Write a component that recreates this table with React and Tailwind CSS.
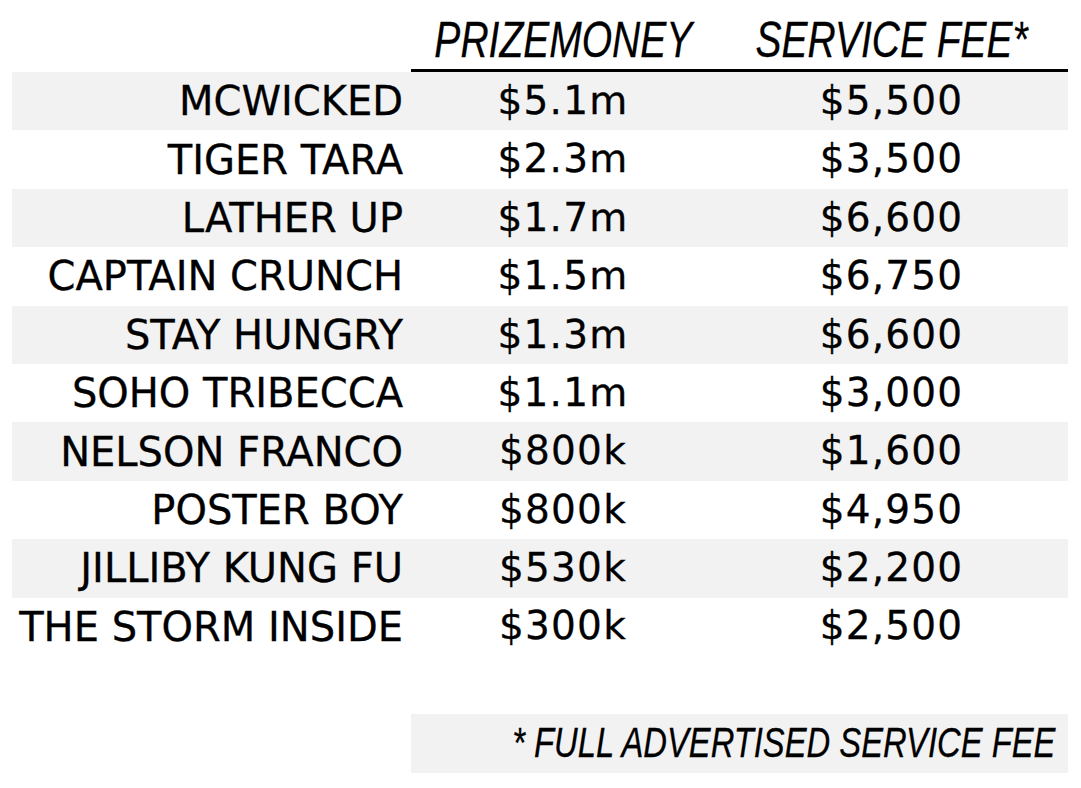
import React from 'react';

const horses = [
  { name: 'MCWICKED', prize: '$5.1m', fee: '$5,500' },
  { name: 'TIGER TARA', prize: '$2.3m', fee: '$3,500' },
  { name: 'LATHER UP', prize: '$1.7m', fee: '$6,600' },
  { name: 'CAPTAIN CRUNCH', prize: '$1.5m', fee: '$6,750' },
  { name: 'STAY HUNGRY', prize: '$1.3m', fee: '$6,600' },
  { name: 'SOHO TRIBECCA', prize: '$1.1m', fee: '$3,000' },
  { name: 'NELSON FRANCO', prize: '$800k', fee: '$1,600' },
  { name: 'POSTER BOY', prize: '$800k', fee: '$4,950' },
  { name: 'JILLIBY KUNG FU', prize: '$530k', fee: '$2,200' },
  { name: 'THE STORM INSIDE', prize: '$300k', fee: '$2,500' },
];

// narrow italic headings: Arial-metric italic squeezed horizontally
const narrow = "font-['Liberation_Sans',sans-serif] italic inline-block whitespace-nowrap shrink-0";

const App = () => {
  return (
    <div className="w-[1081px] h-[788px] bg-white text-black font-['DejaVu_Sans',sans-serif] [-webkit-text-stroke:0.3px_black] pl-[12px] pr-[13px]">
      <div className="flex h-[72px]">
        <div className="w-[399px] shrink-0" />
        <div className="flex flex-1 min-w-0 border-b-[3px] border-black">
          <div className="w-[304px] shrink-0 flex justify-center pt-[15px]">
            <span className={`${narrow} text-[50px] leading-[50px] scale-x-[0.78] origin-center`}>PRIZEMONEY</span>
          </div>
          <div className="flex-1 min-w-0 flex justify-center pt-[15px]">
            <span className={`${narrow} text-[50px] leading-[50px] scale-x-[0.78] origin-center`}>SERVICE FEE*</span>
          </div>
        </div>
      </div>

      {horses.map((h, i) => (
        <div
          key={h.name}
          className={`flex items-center h-[58.4px] text-[40px] ${i % 2 === 0 ? 'bg-[#f2f2f2]' : 'bg-white'}`}
        >
          <div className="w-[399px] shrink-0 text-right pr-[8px] whitespace-nowrap">{h.name}</div>
          <div className="w-[304px] shrink-0 text-center text-[39px] tracking-[1.2px]">{h.prize}</div>
          <div className="flex-1 text-center text-[39px] tracking-[1.2px]">{h.fee}</div>
        </div>
      ))}

      <div className="flex mt-[58px]">
        <div className="w-[399px] shrink-0" />
        <div className="flex-1 min-w-0 h-[59px] bg-[#f2f2f2] flex items-center justify-end pr-[13px]">
          <span className={`${narrow} text-[42px] leading-[42px] scale-x-[0.78] origin-right`}>
            * FULL ADVERTISED SERVICE FEE
          </span>
        </div>
      </div>
    </div>
  );
};

export default App;
